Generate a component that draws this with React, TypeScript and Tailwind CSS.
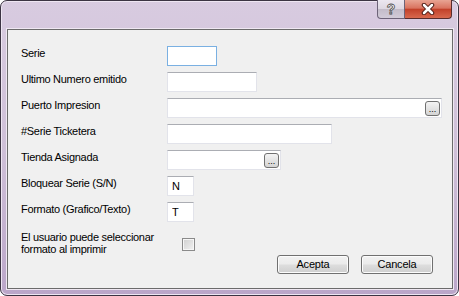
import React from "react";

const font = { fontFamily: '"Liberation Sans", Arial, sans-serif' };

const Label = ({ children }: { children: React.ReactNode }) => (
  <div className="w-[146px] shrink-0 mt-[1px] text-[11px] leading-[13px] tracking-[-0.3px] text-black">
    {children}
  </div>
);

const TextBox = ({ w, value, focused }: { w: string; value?: string; focused?: boolean }) => (
  <input
    readOnly
    defaultValue={value}
    className={`${w} h-[20px] bg-white pl-[4px] text-[11px] text-black outline-none border ${
      focused
        ? "border-[#7ab0e2]"
        : "border-[#e2e3ea] border-t-[#abadb3]"
    }`}
    style={font}
  />
);

const DotsButton = () => (
  <button className="w-[15px] h-[15px] rounded-[3px] border border-[#707070] bg-gradient-to-b from-[#f4f4f4] to-[#d4d4d4] text-[9px] leading-[10px] text-black flex items-end justify-center pb-[1px]">
    ...
  </button>
);

const BrowseBox = ({ w }: { w: string }) => (
  <div className={`${w} h-[20px] bg-white border border-[#e2e3ea] border-t-[#abadb3] flex items-center justify-end pr-[1px]`}>
    <DotsButton />
  </div>
);

const WinButton = ({ children }: { children: React.ReactNode }) => (
  <button className="w-[72px] h-[19px] rounded-[3px] border border-[#707070] bg-[linear-gradient(180deg,#f2f2f2_0%,#ebebeb_48%,#dddddd_52%,#cfcfcf_100%)] text-[11px] leading-[13px] tracking-[-0.2px] text-black shadow-[inset_0_0_0_1px_#fcfcfc]">
    {children}
  </button>
);

export default function App() {
  return (
    <div
      className="w-[459px] h-[296px] rounded-[7px] border border-[#3c3443] bg-[linear-gradient(180deg,#d8cbe0_0%,#cfc0d8_50%,#bba6c9_100%)] flex flex-col shadow-[inset_0_0_0_1px_#eee6f2]"
      style={font}
    >
      <div className="h-[28px] flex justify-end pr-[6px] shrink-0">
        <div className="flex h-[19px] -mt-[1px]">
          <div className="w-[28px] h-full rounded-bl-[4px] border border-t-0 border-[#6d6378] bg-[linear-gradient(180deg,#ece7f0_0%,#ddd7e2_50%,#c3bcc9_52%,#d2cbd8_100%)] flex items-center justify-center text-[14px] font-bold text-white [-webkit-text-stroke:0.8px_#4a4a4a]">
            ?
          </div>
          <div className="w-[47px] h-full rounded-br-[4px] border border-t-0 border-l-0 border-[#5a2c2c] bg-[linear-gradient(180deg,#e8a493_0%,#d9735f_45%,#c2412a_52%,#d8684e_100%)] flex items-center justify-center">
            {/* close glyph, white with dark outline */}
            <svg width="14" height="12" viewBox="0 0 14 12">
              <path d="M3 2 L11 10 M11 2 L3 10" stroke="#4a1a14" strokeWidth="4.5" strokeLinecap="round" fill="none" />
              <path d="M3 2 L11 10 M11 2 L3 10" stroke="#ffffff" strokeWidth="2.5" strokeLinecap="round" fill="none" />
            </svg>
          </div>
        </div>
      </div>
      <div className="ml-[6px] mr-[5px] mb-[6px] flex-1 border border-[#6b6b6b] bg-[#f0f0f0] shadow-[0_0_0_1px_#efe8f2] pl-[13px] pt-[16px] flex flex-col">
        <div className="flex flex-col gap-[6px]">
          <div className="flex items-start h-[20px]">
            <Label>Serie</Label>
            <TextBox w="w-[50px]" focused />
          </div>
          <div className="flex items-start h-[20px]">
            <Label>Ultimo Numero emitido</Label>
            <TextBox w="w-[90px]" />
          </div>
          <div className="flex items-start h-[20px]">
            <Label>Puerto Impresion</Label>
            <BrowseBox w="w-[275px]" />
          </div>
          <div className="flex items-start h-[20px]">
            <Label>#Serie Ticketera</Label>
            <TextBox w="w-[165px]" />
          </div>
          <div className="flex items-start h-[20px]">
            <Label>Tienda Asignada</Label>
            <BrowseBox w="w-[114px]" />
          </div>
          <div className="flex items-start h-[20px]">
            <Label>Bloquear Serie (S/N)</Label>
            <TextBox w="w-[27px]" value="N" />
          </div>
          <div className="flex items-start h-[20px]">
            <Label>Formato (Grafico/Texto)</Label>
            <TextBox w="w-[27px]" value="T" />
          </div>
        </div>
        <div className="flex items-start h-[24px] mt-[9px]">
          <div className="w-[161px] shrink-0 text-[11px] leading-[12px] tracking-[-0.3px] text-black">
            El usuario puede seleccionar
            <br />
            formato al imprimir
          </div>
          <div className="mt-[7px] w-[13px] h-[13px] border border-[#8a8a8a] bg-[linear-gradient(135deg,#cfcfcf,#f2f2f2)] shadow-[inset_0_0_0_1px_#f6f6f6]" />
        </div>
        <div className="flex justify-end gap-[12px] pr-[19px]">
          <WinButton>Acepta</WinButton>
          <WinButton>Cancela</WinButton>
        </div>
      </div>
    </div>
  );
}
